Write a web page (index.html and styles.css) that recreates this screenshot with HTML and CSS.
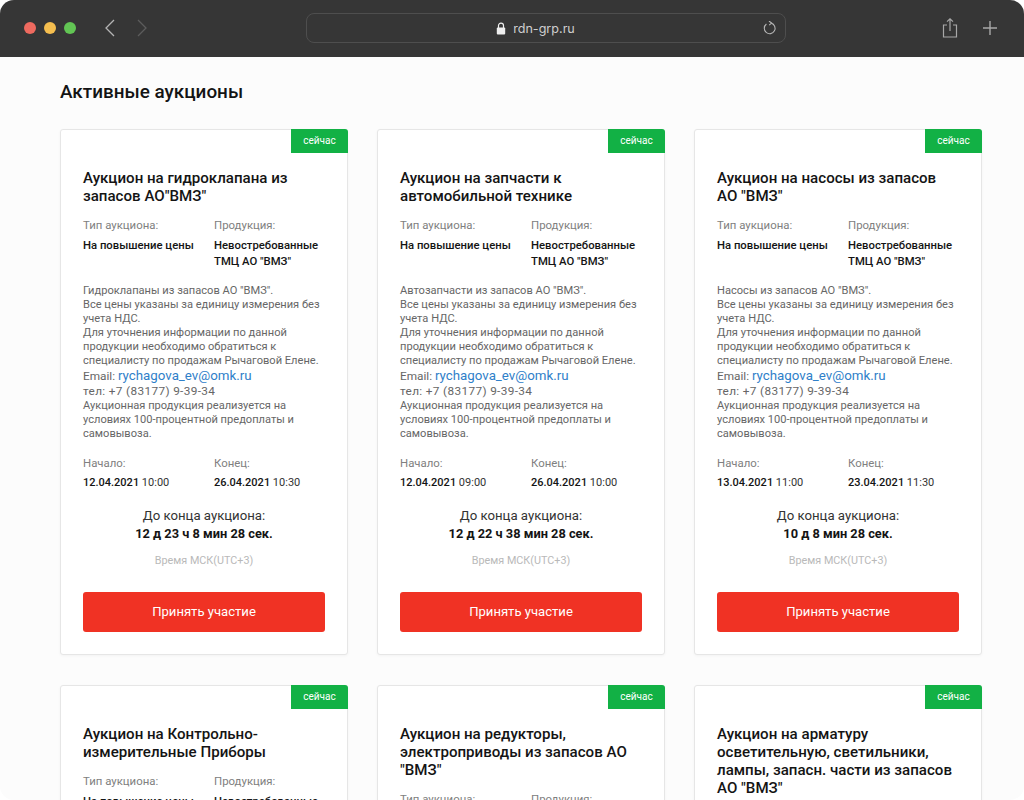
FILE: index.html
```html
<!DOCTYPE html>
<html lang="ru">
<head>
    <meta charset="UTF-8">
    <title>Активные аукционы</title>
    <link rel="stylesheet" href="styles.css">
</head>
<body>
    <div class="window">
        <div class="toolbar">
            <div class="traffic">
                <span class="dot dot-red"></span>
                <span class="dot dot-yellow"></span>
                <span class="dot dot-green"></span>
            </div>
            <div class="nav">
                <svg width="12" height="18" viewBox="0 0 12 18"><path d="M10 1 L2 9 L10 17" fill="none" stroke="#b4b4b4" stroke-width="1.3"/></svg>
                <svg width="12" height="18" viewBox="0 0 12 18"><path d="M2 1 L10 9 L2 17" fill="none" stroke="#5c5c5c" stroke-width="1.3"/></svg>
            </div>
            <div class="address">
                <svg class="lock" width="10" height="13" viewBox="0 0 10 13"><path d="M2.5 6V3.6a2.5 2.5 0 0 1 5 0V6" fill="none" stroke="#eee" stroke-width="1.2"/><rect x="0.8" y="5.6" width="8.4" height="6.8" rx="1" fill="#eee"/></svg>
                <span class="url">rdn-grp.ru</span>
                <svg class="reload" width="14" height="14" viewBox="0 0 14 14"><path d="M8.2 2.1A5.4 5.4 0 1 1 3.4 3" fill="none" stroke="#b4b4b4" stroke-width="1.1"/><path d="M6 0 L8.6 2.1 L6.2 4.2" fill="none" stroke="#b4b4b4" stroke-width="1.1"/></svg>
            </div>
            <div class="actions">
                <svg width="16" height="20" viewBox="0 0 16 20"><path d="M5 7H1.5v12h13V7H11M8 13V1M5 3.6 8 .8l3 2.8" fill="none" stroke="#a8a8a8" stroke-width="1.2"/></svg>
                <svg width="14" height="14" viewBox="0 0 14 14"><path d="M7 0v14M0 7h14" fill="none" stroke="#a8a8a8" stroke-width="1.4"/></svg>
            </div>
        </div>

        <div class="page">
            <h1>Активные аукционы</h1>
            <div class="grid">

                <div class="card">
                    <div class="badge">сейчас</div>
                    <h2>Аукцион на гидроклапана из запасов АО"ВМЗ"</h2>
                    <div class="row row-info">
                        <div><div class="label">Тип аукциона:</div><div class="value">На повышение цены</div></div>
                        <div><div class="label">Продукция:</div><div class="value">Невостребованные ТМЦ АО "ВМЗ"</div></div>
                    </div>
                    <div class="descr">
                        Гидроклапаны из запасов АО "ВМЗ".<br>
                        Все цены указаны за единицу измерения без учета НДС.<br>
                        Для уточнения информации по данной продукции необходимо обратиться к специалисту по продажам Рычаговой Елене.<br>
                        <span class="email">Email: <a href="#">rychagova_ev@omk.ru</a></span><br>
                        <span class="phone">тел: +7 (83177) 9-39-34</span><br>
                        Аукционная продукция реализуется на условиях 100-процентной предоплаты и самовывоза.
                    </div>
                    <div class="row row-dates">
                        <div><div class="label">Начало:</div><div class="date"><b>12.04.2021</b> 10:00</div></div>
                        <div><div class="label">Конец:</div><div class="date"><b>26.04.2021</b> 10:30</div></div>
                    </div>
                    <div class="timer">До конца аукциона:<br><b>12 д 23 ч 8 мин 28 сек.</b></div>
                    <div class="zone">Время МСК(UTC+3)</div>
                    <a class="btn" href="#">Принять участие</a>
                </div>

                <div class="card">
                    <div class="badge">сейчас</div>
                    <h2>Аукцион на запчасти к автомобильной технике</h2>
                    <div class="row row-info">
                        <div><div class="label">Тип аукциона:</div><div class="value">На повышение цены</div></div>
                        <div><div class="label">Продукция:</div><div class="value">Невостребованные ТМЦ АО "ВМЗ"</div></div>
                    </div>
                    <div class="descr">
                        Автозапчасти из запасов АО "ВМЗ".<br>
                        Все цены указаны за единицу измерения без учета НДС.<br>
                        Для уточнения информации по данной продукции необходимо обратиться к специалисту по продажам Рычаговой Елене.<br>
                        <span class="email">Email: <a href="#">rychagova_ev@omk.ru</a></span><br>
                        <span class="phone">тел: +7 (83177) 9-39-34</span><br>
                        Аукционная продукция реализуется на условиях 100-процентной предоплаты и самовывоза.
                    </div>
                    <div class="row row-dates">
                        <div><div class="label">Начало:</div><div class="date"><b>12.04.2021</b> 09:00</div></div>
                        <div><div class="label">Конец:</div><div class="date"><b>26.04.2021</b> 10:00</div></div>
                    </div>
                    <div class="timer">До конца аукциона:<br><b>12 д 22 ч 38 мин 28 сек.</b></div>
                    <div class="zone">Время МСК(UTC+3)</div>
                    <a class="btn" href="#">Принять участие</a>
                </div>

                <div class="card">
                    <div class="badge">сейчас</div>
                    <h2>Аукцион на насосы из запасов АО "ВМЗ"</h2>
                    <div class="row row-info">
                        <div><div class="label">Тип аукциона:</div><div class="value">На повышение цены</div></div>
                        <div><div class="label">Продукция:</div><div class="value">Невостребованные ТМЦ АО "ВМЗ"</div></div>
                    </div>
                    <div class="descr">
                        Насосы из запасов АО "ВМЗ".<br>
                        Все цены указаны за единицу измерения без учета НДС.<br>
                        Для уточнения информации по данной продукции необходимо обратиться к специалисту по продажам Рычаговой Елене.<br>
                        <span class="email">Email: <a href="#">rychagova_ev@omk.ru</a></span><br>
                        <span class="phone">тел: +7 (83177) 9-39-34</span><br>
                        Аукционная продукция реализуется на условиях 100-процентной предоплаты и самовывоза.
                    </div>
                    <div class="row row-dates">
                        <div><div class="label">Начало:</div><div class="date"><b>13.04.2021</b> 11:00</div></div>
                        <div><div class="label">Конец:</div><div class="date"><b>23.04.2021</b> 11:30</div></div>
                    </div>
                    <div class="timer">До конца аукциона:<br><b>10 д 8 мин 28 сек.</b></div>
                    <div class="zone">Время МСК(UTC+3)</div>
                    <a class="btn" href="#">Принять участие</a>
                </div>

                <div class="card">
                    <div class="badge">сейчас</div>
                    <h2>Аукцион на Контрольно-измерительные Приборы</h2>
                    <div class="row row-info">
                        <div><div class="label">Тип аукциона:</div><div class="value">На повышение цены</div></div>
                        <div><div class="label">Продукция:</div><div class="value">Невостребованные ТМЦ АО "ВМЗ"</div></div>
                    </div>
                </div>

                <div class="card">
                    <div class="badge">сейчас</div>
                    <h2>Аукцион на редукторы, электроприводы из запасов АО "ВМЗ"</h2>
                    <div class="row row-info">
                        <div><div class="label">Тип аукциона:</div><div class="value">На повышение цены</div></div>
                        <div><div class="label">Продукция:</div><div class="value">Невостребованные ТМЦ АО "ВМЗ"</div></div>
                    </div>
                </div>

                <div class="card">
                    <div class="badge">сейчас</div>
                    <h2>Аукцион на арматуру осветительную, светильники, лампы, запасн. части из запасов АО "ВМЗ"</h2>
                </div>

            </div>
        </div>
    </div>
</body>
</html>
```

FILE: styles.css
```css
* {
    margin: 0;
    padding: 0;
    box-sizing: border-box;
}

html, body {
    height: 800px;
    overflow: hidden;
    background: #ffffff;
}

body {
    font-family: "Roboto", "Noto Sans", sans-serif;
}

.window {
    height: 800px;
    overflow: hidden;
    border-radius: 14px;
    background: #fcfcfc;
}

.toolbar {
    height: 57px;
    background: #363636;
    display: flex;
    align-items: center;
    padding: 0 27px 1px 24px;
}

.traffic {
    display: flex;
    gap: 8px;
}

.dot {
    width: 12px;
    height: 12px;
    border-radius: 50%;
}

.dot-red { background: #ee6a5f; }
.dot-yellow { background: #f5be4f; }
.dot-green { background: #62c554; }

.nav {
    display: flex;
    gap: 20px;
    margin-left: 28px;
}

.address {
    width: 480px;
    height: 30px;
    margin-left: 158px;
    border: 1px solid #4e4e4e;
    border-radius: 8px;
    display: flex;
    align-items: center;
    justify-content: center;
    position: relative;
}

.lock {
    margin-right: 7px;
}

.url {
    margin-right: 21px;
    font-family: "Inter", sans-serif;
    font-size: 12.6px;
    color: #cfcfcf;
}

.reload {
    position: absolute;
    right: 8px;
    top: 7px;
}

.actions {
    margin-left: auto;
    display: flex;
    align-items: center;
    gap: 25px;
}

.page {
    padding: 0 42px 0 60px;
}

h1 {
    font-size: 18.9px;
    font-weight: 500;
    line-height: 26px;
    color: #141414;
    padding-top: 22px;
    margin-bottom: 24px;
}

.grid {
    display: grid;
    grid-template-columns: repeat(3, 288px);
    column-gap: 29px;
    row-gap: 30px;
}

.card {
    position: relative;
    background: #ffffff;
    border: 1px solid #e6e6e6;
    border-radius: 3px;
    padding: 39px 22px 22px;
    box-shadow: 0 1px 3px rgba(0, 0, 0, 0.04);
}

.badge {
    position: absolute;
    top: -1px;
    right: -1px;
    width: 57px;
    height: 24px;
    background: #12b145;
    color: #ffffff;
    font-size: 10px;
    line-height: 24px;
    text-align: center;
    border-radius: 0 3px 0 0;
}

h2 {
    font-size: 15.1px;
    font-weight: 500;
    line-height: 18px;
    color: #141414;
}

.row {
    display: grid;
    grid-template-columns: 131px 1fr;
}

.row-info {
    margin-top: 12px;
}

.label {
    font-size: 11.4px;
    line-height: 16px;
    color: #808080;
}

.value {
    font-size: 11.3px;
    font-weight: 500;
    line-height: 16px;
    color: #141414;
    margin-top: 5px;
}

.descr {
    margin-top: 14px;
    font-size: 11.1px;
    line-height: 14px;
    color: #666666;
}

.email {
    font-size: 11.8px;
    line-height: 16px;
}

.email a {
    color: #2f80c9;
    text-decoration: none;
    font-size: 13.3px;
}

.phone {
    font-size: 11.8px;
    letter-spacing: 0.35px;
}

.row-dates {
    margin-top: 14px;
}

.date {
    font-size: 11px;
    line-height: 16px;
    color: #333333;
    margin-top: 4px;
}

.date b {
    font-weight: 500;
    color: #141414;
}

.timer {
    margin-top: 16px;
    text-align: center;
    font-size: 13.2px;
    line-height: 17.5px;
    color: #333333;
}

.timer b {
    font-size: 12.8px;
    font-weight: 700;
    color: #141414;
}

.zone {
    margin-top: 12px;
    text-align: center;
    font-size: 10.8px;
    line-height: 14px;
    color: #b9b9b9;
}

.btn {
    display: block;
    margin-top: 24px;
    height: 40px;
    line-height: 40px;
    background: #f03224;
    border-radius: 3px;
    text-align: center;
    text-decoration: none;
    color: #ffffff;
    font-size: 13.1px;
}
```
